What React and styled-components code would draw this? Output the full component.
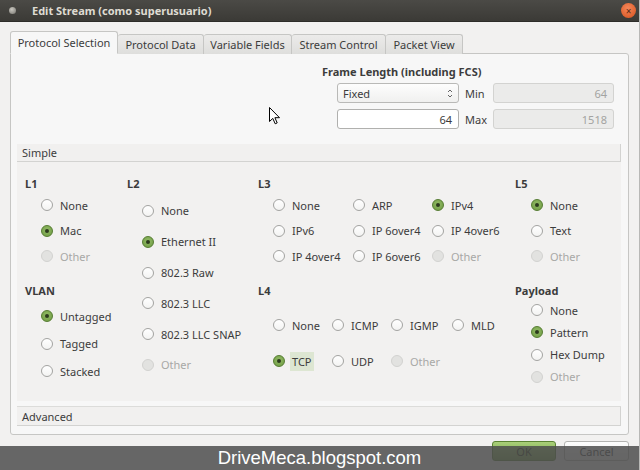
import React from "react";
import styled, { createGlobalStyle, css } from "styled-components";

const Global = createGlobalStyle`
  html, body { margin: 0; padding: 0; background: #f2f1f0; }
  body { font-family: "Noto Sans", "Open Sans", sans-serif; }
  * { box-sizing: border-box; }
`;

const Window = styled.div`
  position: relative;
  width: 640px;
  height: 470px;
  overflow: hidden;
  background: #f2f1f0;
  color: #3c3c3c;
  font-size: 11px;
  border-right: 1px solid #b8b8b6;
`;

const TitleBar = styled.div`
  height: 22px;
  background: linear-gradient(#4b4a46, #3b3a36);
  display: flex;
  align-items: center;
  padding-left: 9px;
  color: #dfdbd2;
  font-weight: 700;
  font-size: 11px;
  border-bottom: 1px solid #2d2c29;
`;

const Dot = styled.span`
  width: 7px;
  height: 7px;
  border-radius: 50%;
  background: radial-gradient(circle at 40% 35%, #c9c7c0, #77756f);
  margin-right: 16px;
`;

const TitleText = styled.span`
  flex: 1;
`;

const CloseBtn = styled.span`
  width: 15px;
  height: 15px;
  border-radius: 50%;
  margin-right: 3px;
  background: radial-gradient(circle at 45% 35%, #f6875a, #d4501c);
  display: flex;
  align-items: center;
  justify-content: center;
  color: #5a2a14;
  font-size: 10px;
  font-weight: 400;
  line-height: 1;
`;

const Body = styled.div`
  padding: 9px 10px 0 10px;
`;

const TabBar = styled.div`
  display: flex;
  align-items: flex-end;
  height: 23px;
  margin-bottom: -1px;
  position: relative;
  z-index: 1;
`;

const Tab = styled.div`
  width: ${(p) => p.$w}px;
  display: flex;
  align-items: center;
  justify-content: center;
  color: #3c3c3c;
  border: 1px solid #c6c6c4;
  border-left-width: ${(p) => (p.$first ? 1 : 0)}px;
  border-radius: 3px 3px 0 0;
  ${(p) =>
    p.$active
      ? css`
          height: 23px;
          background: #f7f7f7;
          border-bottom-color: #f7f7f7;
          border-left-width: 1px;
        `
      : css`
          height: 20px;
          background: linear-gradient(#ecebea, #dededc);
          border-bottom: none;
        `}
`;

const Pane = styled.div`
  background: #f7f7f7;
  border: 1px solid #c6c6c4;
  border-radius: 0 3px 3px 3px;
  padding: 11px 7px 8px 6px;
`;

const FrameBlock = styled.div`
  margin-left: 305px;
`;

const FrameTitle = styled.div`
  font-weight: 700;
  line-height: 14px;
  height: 14px;
`;

const FrameGrid = styled.div`
  margin-top: 4px;
  margin-left: 15px;
  display: grid;
  grid-template-columns: 122px 22px 121px;
  column-gap: 6px;
  grid-auto-rows: 20px;
  row-gap: 6px;
  align-items: center;
`;

const Combo = styled.div`
  height: 20px;
  border: 1px solid #b9b9b7;
  border-radius: 3px;
  background: linear-gradient(#fdfdfd, #f0f0ef);
  display: flex;
  align-items: center;
  padding: 0 5px 0 5px;
  justify-content: space-between;
`;

const Field = styled.div`
  height: 20px;
  border: 1px solid ${(p) => (p.$disabled ? "#d3d3d1" : "#b0b0ae")};
  border-radius: 3px;
  background: ${(p) => (p.$disabled ? "#ebebea" : "#ffffff")};
  color: ${(p) => (p.$disabled ? "#a3a3a1" : "#3c3c3c")};
  display: flex;
  align-items: center;
  justify-content: flex-end;
  padding-right: 6px;
`;

const FieldLabel = styled.span`
  color: #3c3c3c;
`;

const SectionBar = styled.div`
  height: ${(p) => p.$h}px;
  margin-top: ${(p) => p.$mt}px;
  background: #f1f0ef;
  border-top: ${(p) => (p.$top ? "1px solid #dcdcda" : "none")};
  border-bottom: 1px solid #d3d3d1;
  border-right: 1px solid #d3d3d1;
  display: flex;
  align-items: center;
  padding-left: 5px;
`;

const GroupsArea = styled.div`
  height: 239px;
  background: #f2f1f0;
  padding: 15px 0 0 8px;
  display: grid;
  grid-template-columns: 102px 131px 257px 1fr;
  grid-template-rows: 107px auto;
`;

const Group = styled.div`
  grid-column: ${(p) => p.$col};
  grid-row: ${(p) => p.$row || "auto"};
  display: flex;
  flex-direction: column;
`;

const GroupTitle = styled.div`
  font-weight: 700;
  line-height: 14px;
  height: 14px;
`;

const RadioList = styled.div`
  padding-top: ${(p) => p.$pad}px;
  padding-left: ${(p) => p.$indent}px;
  display: grid;
  grid-template-columns: ${(p) => p.$cols || "1fr"};
  grid-auto-rows: ${(p) => p.$pitch}px;
`;

const RadioItem = styled.div`
  display: flex;
  align-items: center;
  gap: 7px;
  color: ${(p) => (p.$disabled ? "#a8a8a6" : "#3c3c3c")};
  white-space: nowrap;
`;

const Circle = styled.span`
  flex: none;
  width: 12px;
  height: 12px;
  border-radius: 50%;
  display: flex;
  align-items: center;
  justify-content: center;
  ${(p) =>
    p.$disabled
      ? css`
          background: #e2e2e0;
          border: 1px solid #d2d2d0;
        `
      : p.$checked
      ? css`
          background: radial-gradient(circle at 50% 40%, #93bb67, #6d9a40);
          border: 1px solid #557c31;
        `
      : css`
          background: linear-gradient(#ffffff, #f3f3f2);
          border: 1px solid #a3a3a1;
        `}
`;

const Pip = styled.span`
  width: 4px;
  height: 4px;
  border-radius: 50%;
  background: #2c3a1d;
`;

const RadioLabel = styled.span`
  padding: 2px 2px;
  margin: 0 -2px;
  background: ${(p) => (p.$focus ? "#dde6d2" : "transparent")};
`;

const ButtonRow = styled.div`
  display: flex;
  justify-content: flex-end;
  gap: 8px;
  margin-top: 6px;
`;

const Button = styled.div`
  width: ${(p) => p.$w}px;
  height: 20px;
  border-radius: 3px;
  display: flex;
  align-items: center;
  justify-content: center;
  ${(p) =>
    p.$primary
      ? css`
          background: linear-gradient(#a9cf78, #739f45);
          border: 1px solid #5a8232;
          color: #1e2a10;
        `
      : css`
          background: linear-gradient(#fdfdfd, #ececeb);
          border: 1px solid #b3b3b1;
          color: #3c3c3c;
        `}
`;

const Watermark = styled.div`
  position: absolute;
  left: 0;
  right: 0;
  bottom: 0;
  height: 24px;
  background: rgba(78, 78, 78, 0.85);
  color: #ffffff;
  font-family: "Liberation Sans", Arial, sans-serif;
  font-size: 18.5px;
  display: flex;
  align-items: center;
  justify-content: center;
  padding-bottom: 1px;
`;

const Cursor = styled.svg`
  position: absolute;
  left: 269px;
  top: 107px;
`;

function Radio({ label, checked, disabled, focus }) {
  return (
    <RadioItem $disabled={disabled}>
      <Circle $checked={checked} $disabled={disabled}>
        {checked && <Pip />}
      </Circle>
      <RadioLabel $focus={focus}>{label}</RadioLabel>
    </RadioItem>
  );
}

function RadioGroup({ title, col, row, items, pitch, pad, indent, cols }) {
  return (
    <Group $col={col} $row={row}>
      <GroupTitle>{title}</GroupTitle>
      <RadioList $pitch={pitch} $pad={pad} $indent={indent} $cols={cols}>
        {items.map((it, i) => (
          <Radio key={i} {...it} />
        ))}
      </RadioList>
    </Group>
  );
}

const tabs = [
  { t: "Protocol Selection", w: 108, active: true },
  { t: "Protocol Data", w: 86 },
  { t: "Variable Fields", w: 88 },
  { t: "Stream Control", w: 94 },
  { t: "Packet View", w: 77 },
];

export default function App() {
  return (
    <>
      <Global />
      <Window>
        <TitleBar>
          <Dot />
          <TitleText>Edit Stream (como superusuario)</TitleText>
          <CloseBtn>×</CloseBtn>
        </TitleBar>
        <Body>
          <TabBar>
            {tabs.map((tb, i) => (
              <Tab key={tb.t} $w={tb.w} $active={tb.active} $first={i === 0}>
                {tb.t}
              </Tab>
            ))}
          </TabBar>
          <Pane>
            <FrameBlock>
              <FrameTitle>Frame Length (including FCS)</FrameTitle>
              <FrameGrid>
                <Combo>
                  <span>Fixed</span>
                  <svg width="6" height="11" viewBox="0 0 6 11">
                    <path d="M1 4 L3 2 L5 4" fill="none" stroke="#666" strokeWidth="1" />
                    <path d="M1 7 L3 9 L5 7" fill="none" stroke="#666" strokeWidth="1" />
                  </svg>
                </Combo>
                <FieldLabel>Min</FieldLabel>
                <Field $disabled>64</Field>
                <Field>64</Field>
                <FieldLabel>Max</FieldLabel>
                <Field $disabled>1518</Field>
              </FrameGrid>
            </FrameBlock>
            <SectionBar $h={18} $mt={15}>Simple</SectionBar>
            <GroupsArea>
              <RadioGroup
                title="L1"
                col={1}
                row={1}
                pitch={25.5}
                pad={1.5}
                indent={16}
                items={[
                  { label: "None" },
                  { label: "Mac", checked: true },
                  { label: "Other", disabled: true },
                ]}
              />
              <RadioGroup
                title="L2"
                col={2}
                row="1 / span 2"
                pitch={30.8}
                pad={4.6}
                indent={15}
                items={[
                  { label: "None" },
                  { label: "Ethernet II", checked: true },
                  { label: "802.3 Raw" },
                  { label: "802.3 LLC" },
                  { label: "802.3 LLC SNAP" },
                  { label: "Other", disabled: true },
                ]}
              />
              <RadioGroup
                title="L3"
                col={3}
                row={1}
                pitch={25.5}
                pad={1.5}
                indent={15}
                cols="80px 79px 1fr"
                items={[
                  { label: "None" },
                  { label: "ARP" },
                  { label: "IPv4", checked: true },
                  { label: "IPv6" },
                  { label: "IP 6over4" },
                  { label: "IP 4over6" },
                  { label: "IP 4over4" },
                  { label: "IP 6over6" },
                  { label: "Other", disabled: true },
                ]}
              />
              <RadioGroup
                title="L5"
                col={4}
                row={1}
                pitch={25.5}
                pad={1.5}
                indent={16}
                items={[
                  { label: "None", checked: true },
                  { label: "Text" },
                  { label: "Other", disabled: true },
                ]}
              />
              <RadioGroup
                title="VLAN"
                col={1}
                row={2}
                pitch={27.5}
                pad={4.25}
                indent={16}
                items={[
                  { label: "Untagged", checked: true },
                  { label: "Tagged" },
                  { label: "Stacked" },
                ]}
              />
              <RadioGroup
                title="L4"
                col={3}
                row={2}
                pitch={36}
                pad={9}
                indent={15}
                cols="59px 59px 61px 1fr"
                items={[
                  { label: "None" },
                  { label: "ICMP" },
                  { label: "IGMP" },
                  { label: "MLD" },
                  { label: "TCP", checked: true, focus: true },
                  { label: "UDP" },
                  { label: "Other", disabled: true },
                ]}
              />
              <RadioGroup
                title="Payload"
                col={4}
                row={2}
                pitch={22.3}
                pad={0.9}
                indent={16}
                items={[
                  { label: "None" },
                  { label: "Pattern", checked: true },
                  { label: "Hex Dump" },
                  { label: "Other", disabled: true },
                ]}
              />
            </GroupsArea>
            <SectionBar $h={20} $mt={5} $top>Advanced</SectionBar>
          </Pane>
          <ButtonRow>
            <Button $primary $w={64}>OK</Button>
            <Button $w={65}>Cancel</Button>
          </ButtonRow>
        </Body>
        <Cursor width="12" height="18" viewBox="0 0 12 18">
          <path
            d="M0.5 0.5 L0.5 14.5 L3.8 11.4 L6.2 16.8 L8.2 15.9 L5.9 10.7 L10.5 10.7 Z"
            fill="#ffffff"
            stroke="#000000"
            strokeWidth="1"
            strokeLinejoin="round"
          />
        </Cursor>
        <Watermark>DriveMeca.blogspot.com</Watermark>
      </Window>
    </>
  );
}
